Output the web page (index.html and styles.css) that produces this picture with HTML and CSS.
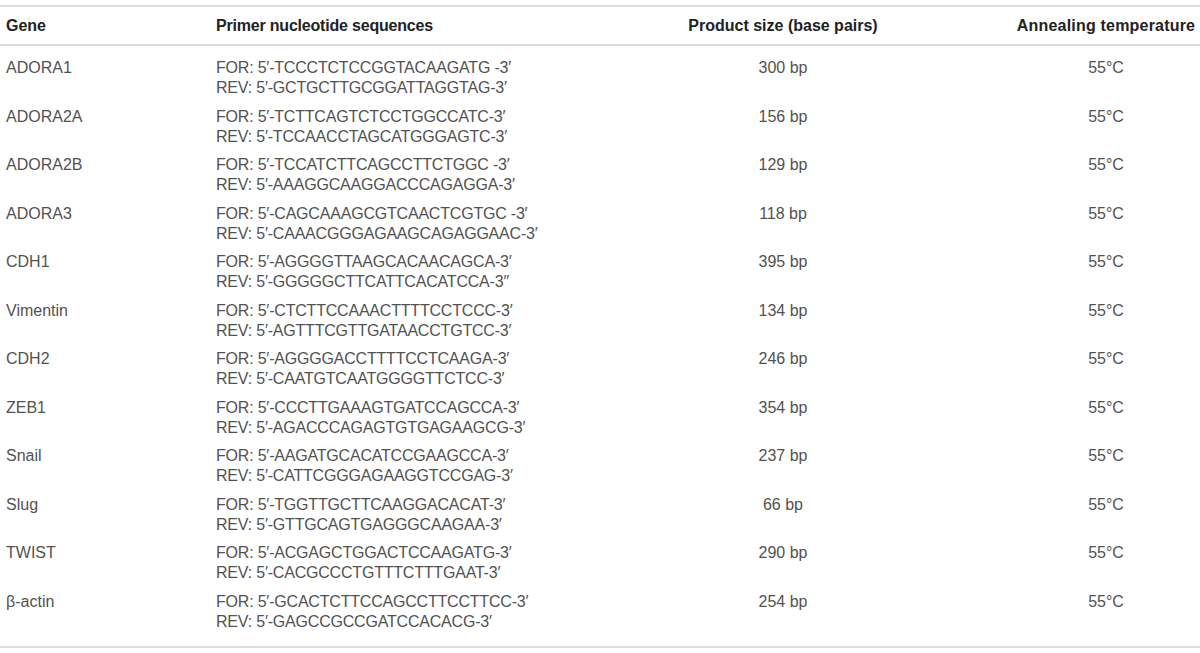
FILE: index.html
```html
<!DOCTYPE html>
<html>
<head>
<meta charset="utf-8">
<link rel="stylesheet" href="styles.css">
</head>
<body>
<div class="table">
  <div class="row head">
    <div class="c gene">Gene</div>
    <div class="c primer">Primer nucleotide sequences</div>
    <div class="c size">Product size (base pairs)</div>
    <div class="c temp">Annealing temperature</div>
  </div>
  <div class="body">
    <div class="row"><div class="c gene">ADORA1</div><div class="c primer"><div>FOR: 5′-TCCCTCTCCGGTACAAGATG -3′</div><div>REV: 5′-GCTGCTTGCGGATTAGGTAG-3′</div></div><div class="c size">300 bp</div><div class="c temp">55°C</div></div>
    <div class="row"><div class="c gene">ADORA2A</div><div class="c primer"><div>FOR: 5′-TCTTCAGTCTCCTGGCCATC-3′</div><div>REV: 5′-TCCAACCTAGCATGGGAGTC-3′</div></div><div class="c size">156 bp</div><div class="c temp">55°C</div></div>
    <div class="row"><div class="c gene">ADORA2B</div><div class="c primer"><div>FOR: 5′-TCCATCTTCAGCCTTCTGGC -3′</div><div>REV: 5′-AAAGGCAAGGACCCAGAGGA-3′</div></div><div class="c size">129 bp</div><div class="c temp">55°C</div></div>
    <div class="row"><div class="c gene">ADORA3</div><div class="c primer"><div>FOR: 5′-CAGCAAAGCGTCAACTCGTGC -3′</div><div>REV: 5′-CAAACGGGAGAAGCAGAGGAAC-3′</div></div><div class="c size">118 bp</div><div class="c temp">55°C</div></div>
    <div class="row"><div class="c gene">CDH1</div><div class="c primer"><div>FOR: 5′-AGGGGTTAAGCACAACAGCA-3′</div><div>REV: 5′-GGGGGCTTCATTCACATCCA-3′′</div></div><div class="c size">395 bp</div><div class="c temp">55°C</div></div>
    <div class="row"><div class="c gene">Vimentin</div><div class="c primer"><div>FOR: 5′-CTCTTCCAAACTTTTCCTCCC-3′</div><div>REV: 5′-AGTTTCGTTGATAACCTGTCC-3′</div></div><div class="c size">134 bp</div><div class="c temp">55°C</div></div>
    <div class="row"><div class="c gene">CDH2</div><div class="c primer"><div>FOR: 5′-AGGGGACCTTTTCCTCAAGA-3′</div><div>REV: 5′-CAATGTCAATGGGGTTCTCC-3′</div></div><div class="c size">246 bp</div><div class="c temp">55°C</div></div>
    <div class="row"><div class="c gene">ZEB1</div><div class="c primer"><div>FOR: 5′-CCCTTGAAAGTGATCCAGCCA-3′</div><div>REV: 5′-AGACCCAGAGTGTGAGAAGCG-3′</div></div><div class="c size">354 bp</div><div class="c temp">55°C</div></div>
    <div class="row"><div class="c gene">Snail</div><div class="c primer"><div>FOR: 5′-AAGATGCACATCCGAAGCCA-3′</div><div>REV: 5′-CATTCGGGAGAAGGTCCGAG-3′</div></div><div class="c size">237 bp</div><div class="c temp">55°C</div></div>
    <div class="row"><div class="c gene">Slug</div><div class="c primer"><div>FOR: 5′-TGGTTGCTTCAAGGACACAT-3′</div><div>REV: 5′-GTTGCAGTGAGGGCAAGAA-3′</div></div><div class="c size">66 bp</div><div class="c temp">55°C</div></div>
    <div class="row"><div class="c gene">TWIST</div><div class="c primer"><div>FOR: 5′-ACGAGCTGGACTCCAAGATG-3′</div><div>REV: 5′-CACGCCCTGTTTCTTTGAAT-3′</div></div><div class="c size">290 bp</div><div class="c temp">55°C</div></div>
    <div class="row"><div class="c gene">β-actin</div><div class="c primer"><div>FOR: 5′-GCACTCTTCCAGCCTTCCTTCC-3′</div><div>REV: 5′-GAGCCGCCGATCCACACG-3′</div></div><div class="c size">254 bp</div><div class="c temp">55°C</div></div>
  </div>
</div>
</body>
</html>
```
FILE: styles.css
```css
html, body {
  margin: 0;
  padding: 0;
  background: #fff;
}
body {
  font-family: "Liberation Sans", Arial, sans-serif;
  font-size: 16px;
  line-height: 20px;
  color: #525252;
}
.table {
  margin-top: 5px;
  border-top: 2px solid #dcdcdc;
  border-bottom: 2px solid #dcdcdc;
}
.row {
  display: grid;
  grid-template-columns: 210px 470px 206px 314px;
  padding: 4px 0 4.5px;
}
.head {
  padding: 9px 0 8px;
  border-bottom: 2px solid #dcdcdc;
  font-weight: bold;
  color: #222;
}
.body {
  padding: 8px 0 10px;
}
.gene, .primer {
  padding-left: 6px;
}
.primer {
  letter-spacing: -0.2px;
}
.size {
  text-align: center;
}
.temp {
  text-align: center;
  padding-left: 126px;
  white-space: nowrap;
}
.head .temp {
  letter-spacing: 0.2px;
}
```
